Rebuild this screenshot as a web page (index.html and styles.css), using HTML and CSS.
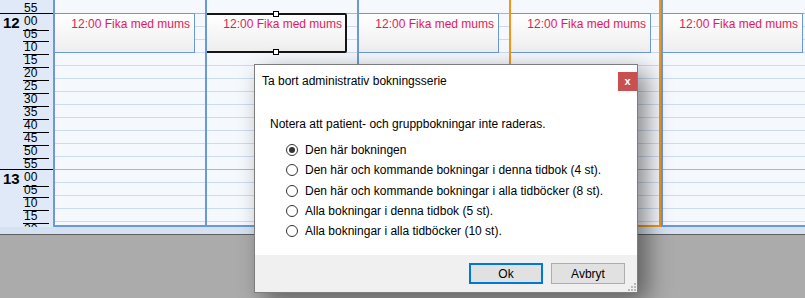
FILE: index.html
```html
<!DOCTYPE html>
<html lang="sv">
<head>
    <meta charset="UTF-8">
    <title>Ta bort administrativ bokningsserie</title>
    <link rel="stylesheet" href="styles.css">
</head>
<body>
<div class="app">
    <div class="calendar">
        <div class="gutter">
            <div class="trow hourend"><span class="hour"></span><span class="min">55</span></div>
            <div class="trow"><span class="hour">12</span><span class="min">00</span></div>
            <div class="trow"><span class="hour"></span><span class="min">05</span></div>
            <div class="trow"><span class="hour"></span><span class="min">10</span></div>
            <div class="trow"><span class="hour"></span><span class="min">15</span></div>
            <div class="trow"><span class="hour"></span><span class="min">20</span></div>
            <div class="trow"><span class="hour"></span><span class="min">25</span></div>
            <div class="trow"><span class="hour"></span><span class="min">30</span></div>
            <div class="trow"><span class="hour"></span><span class="min">35</span></div>
            <div class="trow"><span class="hour"></span><span class="min">40</span></div>
            <div class="trow"><span class="hour"></span><span class="min">45</span></div>
            <div class="trow"><span class="hour"></span><span class="min">50</span></div>
            <div class="trow hourend"><span class="hour"></span><span class="min">55</span></div>
            <div class="trow"><span class="hour">13</span><span class="min">00</span></div>
            <div class="trow"><span class="hour"></span><span class="min">05</span></div>
            <div class="trow"><span class="hour"></span><span class="min">10</span></div>
            <div class="trow"><span class="hour"></span><span class="min">15</span></div>
            <div class="trow"><span class="hour"></span><span class="min">20</span></div>
        </div>

        <div class="day">
            <div class="slots"></div>
            <div class="event"><span>12:00 Fika med mums</span></div>
        </div>
        <div class="day">
            <div class="slots"></div>
            <div class="event selected">
                <span>12:00 Fika med mums</span>
                <i class="handle top"></i>
                <i class="handle bottom"></i>
            </div>
        </div>
        <div class="day">
            <div class="slots"></div>
            <div class="event"><span>12:00 Fika med mums</span></div>
        </div>
        <div class="day today">
            <div class="slots"></div>
            <div class="event"><span>12:00 Fika med mums</span></div>
        </div>
        <div class="day">
            <div class="slots"></div>
            <div class="event"><span>12:00 Fika med mums</span></div>
        </div>
    </div>
    <div class="strip"></div>
    <div class="backdrop"></div>

    <div class="dialog">
        <div class="titlebar">
            <span class="title">Ta bort administrativ bokningsserie</span>
            <button class="close" type="button">x</button>
        </div>
        <div class="dialog-body">
            <p class="note">Notera att patient- och gruppbokningar inte raderas.</p>
            <ul class="options">
                <li><span class="radio checked"></span>Den här bokningen</li>
                <li><span class="radio"></span>Den här och kommande bokningar i denna tidbok (4 st).</li>
                <li><span class="radio"></span>Den här och kommande bokningar i alla tidböcker (8 st).</li>
                <li><span class="radio"></span>Alla bokningar i denna tidbok (5 st).</li>
                <li><span class="radio"></span>Alla bokningar i alla tidböcker (10 st).</li>
            </ul>
        </div>
        <div class="footer">
            <button class="btn default" type="button">Ok</button>
            <button class="btn" type="button">Avbryt</button>
            <svg class="grip" width="8" height="8" viewBox="0 0 8 8">
                <rect x="6" y="0" width="2" height="2" fill="#b9b9b9"/>
                <rect x="3" y="3" width="2" height="2" fill="#b9b9b9"/>
                <rect x="6" y="3" width="2" height="2" fill="#b9b9b9"/>
                <rect x="0" y="6" width="2" height="2" fill="#b9b9b9"/>
                <rect x="3" y="6" width="2" height="2" fill="#b9b9b9"/>
                <rect x="6" y="6" width="2" height="2" fill="#b9b9b9"/>
            </svg>
        </div>
    </div>
</div>

<script>
    // fill every day column with 5-minute slots, the hour lines are darker
    document.querySelectorAll('.slots').forEach(function (slots) {
        for (let i = 0; i < 18; i++) {
            const slot = document.createElement('div');
            slot.className = (i === 0 || i === 12) ? 'slot hourend' : 'slot';
            slots.appendChild(slot);
        }
    });
</script>
</body>
</html>
```

FILE: styles.css
```css
body {
    margin: 0;
    font-family: "Liberation Sans", Arial, sans-serif;
    font-size: 12px;
    overflow: hidden;
}
.app {
    position: relative;
    width: 805px;
    height: 298px;
    background-color: #ababab;
}

/* calendar */
.calendar {
    display: grid;
    grid-template-columns: 53px repeat(5, 152px);
    height: 227px;
    overflow: hidden;
    background-color: #f5f8fd;
}
.gutter {
    background-color: #dfe9f8;
    padding-top: 1px;
    overflow: hidden;
}
.trow {
    display: grid;
    grid-template-columns: 23px 26px;
    height: 13px;
    box-sizing: border-box;
}
.trow .min {
    border-bottom: 1px solid #000;
    padding-left: 1px;
    line-height: 14px;
    color: #000;
}
.trow.hourend {
    border-bottom: 1px solid #000;
}
.trow.hourend .min {
    border-bottom: none;
}
.trow .hour {
    font-weight: bold;
    font-size: 15px;
    line-height: 17px;
    padding-left: 3px;
    white-space: nowrap;
}
.day {
    position: relative;
    border-left: 2px solid #6b98d6;
    border-bottom: 2px solid #6b98d6;
    overflow: hidden;
    box-sizing: border-box;
}
.day.today {
    border-left-color: #f0961c;
    border-right: 2px solid #f0961c;
    border-bottom-color: #f0961c;
}
.slots {
    padding-top: 1px;
}
.slot {
    height: 13px;
    box-sizing: border-box;
    border-bottom: 1px solid #cbdaef;
}
.slot.hourend {
    border-bottom-color: #9fb8dc;
}
.event {
    position: absolute;
    top: 13px;
    left: -2px;
    width: 142px;
    height: 40px;
    box-sizing: border-box;
    border: 1px solid #6b98d6;
    background: linear-gradient(#ffffff, #eeeeee);
    color: #e2195c;
    text-align: right;
    padding: 3px 4px 0 0;
    white-space: nowrap;
}
.today .event {
    left: -2px;
}
.event.selected {
    border: 2px solid #151515;
    border-radius: 2px;
    padding: 2px 3px 0 0;
    overflow: visible;
}
.handle {
    position: absolute;
    left: 66px;
    width: 4px;
    height: 4px;
    background: #fff;
    border: 1px solid #000;
}
.handle.top {
    top: -4px;
}
.handle.bottom {
    bottom: -4px;
}
.strip {
    height: 7px;
    background-color: #d6e2f1;
    border-bottom: 1px solid #5f5f5f;
}

/* dialog */
.dialog {
    position: absolute;
    left: 254px;
    top: 64px;
    width: 384px;
    height: 229px;
    box-sizing: border-box;
    background: #fff;
    border: 1px solid #7d7d7d;
    box-shadow: 9px 8px 22px rgba(0, 0, 0, 0.45);
    display: flex;
    flex-direction: column;
    color: #000;
}
.titlebar {
    display: flex;
    justify-content: space-between;
    align-items: flex-start;
    height: 30px;
    padding-left: 7px;
}
.title {
    margin-top: 9px;
}
.close {
    margin-top: 7px;
    width: 19px;
    height: 19px;
    border: none;
    padding: 0;
    background-color: #c75050;
    color: #fff;
    font-family: "Liberation Sans", Arial, sans-serif;
    font-weight: bold;
    font-size: 11px;
    line-height: 17px;
}
.dialog-body {
    flex: 1;
    padding-left: 15px;
}
.note {
    margin: 22px 0 9px;
}
.options {
    list-style: none;
    margin: 0;
    padding-left: 16px;
}
.options li {
    display: flex;
    align-items: center;
    height: 20.3px;
    white-space: nowrap;
}
.radio {
    width: 12px;
    height: 12px;
    box-sizing: border-box;
    border: 1px solid #333;
    border-radius: 50%;
    margin-right: 7px;
    display: flex;
    align-items: center;
    justify-content: center;
}
.radio.checked::after {
    content: "";
    width: 6px;
    height: 6px;
    border-radius: 50%;
    background: #333;
}
.footer {
    position: relative;
    height: 37px;
    background-color: #f0f0f0;
    display: flex;
    justify-content: flex-end;
    align-items: flex-start;
    gap: 8px;
    padding: 8px 12px 0 0;
    box-sizing: border-box;
}
.btn {
    width: 74px;
    height: 21px;
    background-color: #e1e1e1;
    border: 1px solid #adadad;
    font-family: "Liberation Sans", Arial, sans-serif;
    font-size: 12px;
    color: #000;
    padding: 0;
}
.btn.default {
    border: 2px solid #0078d7;
}
.grip {
    position: absolute;
    right: 1px;
    bottom: 1px;
}
```
